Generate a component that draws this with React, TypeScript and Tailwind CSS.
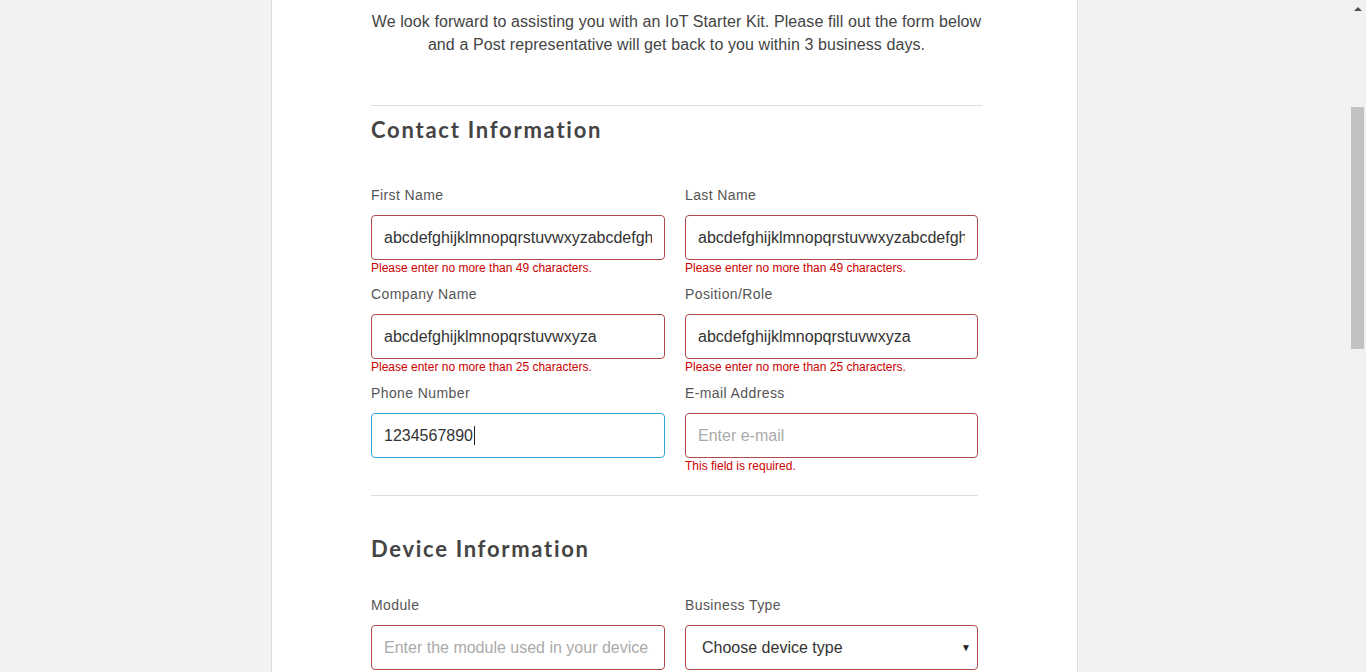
import React from "react";

const sans = "font-['Liberation_Sans',Arial,sans-serif]";

type Field = {
  label: string;
  value?: string;
  placeholder?: string;
  error?: string;
  focused?: boolean;
};

const contactRows: Field[][] = [
  [
    {
      label: "First Name",
      value: "abcdefghijklmnopqrstuvwxyzabcdefghijklmnopqrstuvwxyz",
      error: "Please enter no more than 49 characters.",
    },
    {
      label: "Last Name",
      value: "abcdefghijklmnopqrstuvwxyzabcdefghijklmnopqrstuvwxyz",
      error: "Please enter no more than 49 characters.",
    },
  ],
  [
    {
      label: "Company Name",
      value: "abcdefghijklmnopqrstuvwxyza",
      error: "Please enter no more than 25 characters.",
    },
    {
      label: "Position/Role",
      value: "abcdefghijklmnopqrstuvwxyza",
      error: "Please enter no more than 25 characters.",
    },
  ],
  [
    { label: "Phone Number", value: "1234567890", focused: true },
    { label: "E-mail Address", placeholder: "Enter e-mail", error: "This field is required." },
  ],
];

function FormField({ field }: { field: Field }) {
  const border = field.focused ? "border-[#2ea6dd]" : "border-[#b04a4a]";
  return (
    <div className="flex flex-col">
      <label className={`${sans} mb-[10px] text-[14px] leading-[20px] tracking-[0.4px] text-[#555]`}>
        {field.label}
      </label>
      {field.focused ? (
        <div
          className={`${sans} flex h-[45px] items-center rounded-[4px] border bg-white px-[12px] text-[16px] text-[#333] ${border}`}
        >
          <span>{field.value}</span>
          <span className="ml-[1px] h-[19px] w-px bg-[#222]" />
        </div>
      ) : (
        <input
          readOnly
          value={field.value ?? ""}
          placeholder={field.placeholder}
          className={`${sans} h-[45px] w-full rounded-[4px] border bg-white px-[12px] text-[16px] text-[#333] placeholder:text-[#aaa] outline-none ${border}`}
        />
      )}
      <div className={`${sans} h-[16px] text-[12px] leading-[16px] text-[#cc0000]`}>{field.error}</div>
    </div>
  );
}

export default function App() {
  return (
    <div className="flex h-[672px] w-full overflow-hidden bg-[#f2f2f2]">
      <div className="flex flex-1 justify-center">
        <div className="h-full w-[807px] border-x border-[#dddddd] bg-white pl-[99px] pr-[94px] pt-[10px]">
          <p className={`${sans} w-[611px] text-center text-[16px] leading-[23px] tracking-[0.09px] text-[#444]`}>
            We look forward to assisting you with an IoT Starter Kit. Please fill out the form below
            <br />
            and a Post representative will get back to you within 3 business days.
          </p>

          <div className="mt-[49px] w-[611px] border-t border-[#dddddd]" />

          <h2 className="mt-[9px] font-['Lato',sans-serif] text-[22px] font-bold leading-[30px] tracking-[1.75px] text-[#444]">
            Contact Information
          </h2>

          <div className="mt-[40px] flex w-[607px] flex-col gap-[8px]">
            {contactRows.map((row, i) => (
              <div key={i} className="grid grid-cols-[294px_293px] gap-x-[20px]">
                {row.map((f) => (
                  <FormField key={f.label} field={f} />
                ))}
              </div>
            ))}
          </div>

          <div className="mt-[21px] w-[607px] border-t border-[#dddddd]" />

          <h2 className="mt-[38px] font-['Lato',sans-serif] text-[22px] font-bold leading-[30px] tracking-[1.7px] text-[#444]">
            Device Information
          </h2>

          <div className="mt-[31px] grid w-[607px] grid-cols-[294px_293px] gap-x-[20px]">
            <FormField field={{ label: "Module", placeholder: "Enter the module used in your device" }} />
            <div className="flex flex-col">
              <label className={`${sans} mb-[10px] text-[14px] leading-[20px] tracking-[0.4px] text-[#555]`}>
                Business Type
              </label>
              <div
                className={`${sans} flex h-[45px] items-center justify-between rounded-[4px] border border-[#b04a4a] bg-white pl-[16px] pr-[6px] text-[16px] text-[#333]`}
              >
                <span>Choose device type</span>
                <span className="text-[10px] text-[#222]">▼</span>
              </div>
            </div>
          </div>
        </div>
      </div>

      {/* native-looking scrollbar */}
      <div className="flex h-full w-[17px] flex-col items-center bg-[#f1f1f1]">
        <div className="flex h-[17px] w-full items-center justify-center">
          <div className="h-0 w-0 border-x-[4px] border-b-[4px] border-x-transparent border-b-[#505050]" />
        </div>
        <div className="mt-[90px] h-[242px] w-[13px] bg-[#c1c1c1]" />
      </div>
    </div>
  );
}
